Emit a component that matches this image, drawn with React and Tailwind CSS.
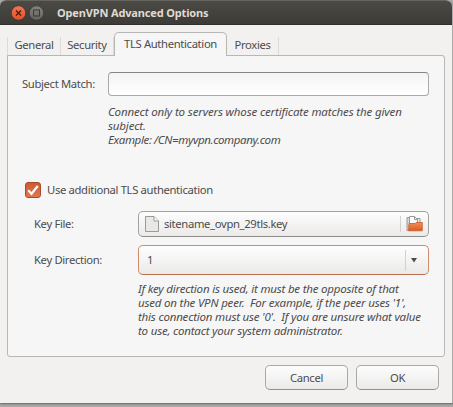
import React, { useState } from "react";

function FileIcon() {
    return (
        <svg className="h-4 w-[14px] shrink-0" viewBox="0 0 14 16">
            <path
                d="M.5 .5h8.5l4.5 4.5v10.5h-13z"
                fill="#e9e8e6"
                stroke="#9a9a97"
            />
            <path d="M9 .5v4.5h4.5" fill="#fbfbfb" stroke="#9a9a97" />
        </svg>
    );
}

function FolderIcon() {
    return (
        <svg className="h-4 w-[17px] shrink-0" viewBox="0 0 17 16">
            <defs>
                <linearGradient id="folder" x1="0" y1="0" x2="0" y2="1">
                    <stop offset="0" stopColor="#f0905c" />
                    <stop offset="1" stopColor="#dd5a20" />
                </linearGradient>
            </defs>
            <path d="M1 14.5v-13h3v13z" fill="#d8d7d4" stroke="#9b9a97" />
            <path d="M9 2.5h5v5H9z" fill="#e9e8e6" stroke="#9b9a97" />
            <path
                d="M3.5 8V.5h5l3 3V8z"
                fill="#fafafa"
                stroke="#9b9a97"
            />
            <path d="M8.5 .5v3h3" fill="none" stroke="#9b9a97" />
            <path
                d="M3 7.5h6l1-1h6.3v8.3H2.5z"
                fill="url(#folder)"
                stroke="#cf5a28"
                strokeWidth=".8"
            />
        </svg>
    );
}

function TitleBar() {
    return (
        <div className="flex h-[25px] items-center rounded-t-[6px] border-t border-[#66645e] border-b border-b-[#2f2e2a] bg-linear-to-b from-[#4c4a45] to-[#3c3b37] pl-[11px]">
            <svg className="mt-px h-4 w-[34px] shrink-0" viewBox="0 0 34 16">
                <defs>
                    <linearGradient id="close" x1="0" y1="0" x2="0" y2="1">
                        <stop offset="0" stopColor="#f4764f" />
                        <stop offset="1" stopColor="#e2502a" />
                    </linearGradient>
                    <linearGradient id="max" x1="0" y1="0" x2="0" y2="1">
                        <stop offset="0" stopColor="#85847c" />
                        <stop offset="1" stopColor="#64635c" />
                    </linearGradient>
                </defs>
                <circle cx="7.5" cy="8" r="7.2" fill="url(#close)" stroke="#35332f" strokeWidth=".6" />
                <path d="M5 5.5l5 5m0-5l-5 5" stroke="#4a1b10" strokeWidth="1.3" />
                <circle cx="25.5" cy="8" r="7.2" fill="url(#max)" stroke="#35332f" strokeWidth=".6" />
                <rect x="22.5" y="5" width="6" height="6" fill="none" stroke="#3a3934" />
            </svg>
            <h1 className="ml-3 text-[11px] font-bold tracking-[-0.15px] whitespace-nowrap text-[#dfdbd2]">
                OpenVPN Advanced Options
            </h1>
        </div>
    );
}

const tabs = [
    { name: "General", width: "w-[54px]" },
    { name: "Security", width: "w-[53px]" },
    { name: "TLS Authentication", width: "w-[113px]" },
    { name: "Proxies", width: "w-[52px]" },
];

export default function App() {
    const [activeTab, setActiveTab] = useState("TLS Authentication");
    const [useTls, setUseTls] = useState(true);
    const [subject, setSubject] = useState("");

    return (
        <div className="h-[407px] w-[453px] overflow-hidden bg-[#aaa9a8] font-['Noto_Sans',sans-serif] text-[11.25px] leading-[14px] tracking-[-0.34px] text-[#4c4c4c]">
            <div className="flex h-[403px] w-[453px] flex-col rounded-t-[6px] border-r border-[#aaa9a7] bg-[#f2f1f0] shadow-[0_1px_2px_#666]">
                <TitleBar />

                {/* Tabs */}
                <div className="mt-[7px] ml-[7px] flex h-6 items-end">
                    {tabs.map((tab) => (
                        <button
                            key={tab.name}
                            onClick={() => setActiveTab(tab.name)}
                            className={`shrink-0 whitespace-nowrap ${tab.width} ${
                                activeTab === tab.name
                                    ? "relative h-6 rounded-t-[5px] border border-b-0 border-[#b9b7b4] bg-[#f7f6f6] pb-0.5"
                                    : "h-[19px] border-r border-[#dddbd9] pb-[3px] first:border-l"
                            }`}
                        >
                            {tab.name}
                        </button>
                    ))}
                </div>

                {/* Tab page */}
                <div className="-mt-px ml-[7px] h-[302px] w-[438px] rounded-[3px] rounded-tl-none border border-[#b9b7b4] bg-[#f7f6f6]">
                    <div className="mt-4 ml-[14px] flex h-6 items-center">
                        <label htmlFor="subject" className="w-[86px] whitespace-nowrap">
                            Subject Match:
                        </label>
                        <input
                            id="subject"
                            value={subject}
                            onChange={(e) => setSubject(e.target.value)}
                            className="h-6 w-[321px] rounded-[4px] border border-[#aaa9a6] border-t-[#858585] bg-linear-to-b from-[#f4f4f4] to-white px-2 outline-none"
                        />
                    </div>
                    <p className="mt-[9px] ml-[100px] text-[11.5px] tracking-[-0.14px] whitespace-nowrap italic">
                        Connect only to servers whose certificate matches the given
                        <br />
                        subject.
                        <br />
                        <span className="tracking-[-0.36px]">
                            Example: /CN=myvpn.company.com
                        </span>
                    </p>

                    <label className="mt-[35px] ml-[17px] flex h-4 items-center whitespace-nowrap">
                        <input
                            type="checkbox"
                            checked={useTls}
                            onChange={(e) => setUseTls(e.target.checked)}
                            className="sr-only"
                        />
                        <span className="mr-[6px] flex h-4 w-4 items-center justify-center rounded-[3px] border border-[#a94a28] bg-linear-to-b from-[#cf5a33] to-[#dd7850]">
                            {useTls && (
                                <svg className="h-3 w-3" viewBox="0 0 12 12">
                                    <path
                                        d="M1.2 6.2l3.3 3.6L10.8 2"
                                        fill="none"
                                        stroke="#fff"
                                        strokeWidth="2.2"
                                    />
                                </svg>
                            )}
                        </span>
                        Use additional TLS authentication
                    </label>

                    <div className="mt-[13px] ml-[26px] flex h-[26px] items-center">
                        <span className="w-[104px]">Key File:</span>
                        <button className="flex h-[26px] w-[291px] items-center rounded-[5px] border border-[#a3a29f] border-b-[#8c8b88] bg-linear-to-b from-[#fdfdfd] to-[#ebeae9] pr-[5px] pl-1.5">
                            <FileIcon />
                            <span className="ml-[5px]">sitename_ovpn_29tls.key</span>
                            <span className="mr-[5px] ml-auto h-4 w-px bg-[#d3d1cf]" />
                            <FolderIcon />
                        </button>
                    </div>

                    <div className="mt-2 ml-[26px] flex h-[30px] items-center">
                        <span className="w-[104px]">Key Direction:</span>
                        <button className="flex h-[30px] w-[291px] items-center rounded-[5px] border border-[#d08b6c] border-b-[#b96e4e] bg-linear-to-b from-[#fefefe] to-[#ebeae9] pr-[11px] pl-2">
                            <span>1</span>
                            <span className="mr-[5px] ml-auto h-[21px] w-px bg-[#d3d1cf]" />
                            <svg className="h-1.5 w-1.5" viewBox="0 0 6 6">
                                <path d="M0 1h6L3 5.5z" fill="#4c4c4c" />
                            </svg>
                        </button>
                    </div>
                    <p className="mt-[7px] ml-[130px] text-[11.5px] tracking-[-0.2px] whitespace-pre italic">
                        {"If key direction is used, it must be the opposite of that\n" +
                            "used on the VPN peer.  For example, if the peer uses '1',\n" +
                            "this connection must use '0'.  If you are unsure what value\n" +
                            "to use, contact your system administrator."}
                    </p>
                </div>

                {/* Dialog buttons */}
                <div className="mt-[8px] mr-[13px] flex justify-end gap-2">
                    {["Cancel", "OK"].map((name) => (
                        <button
                            key={name}
                            className="h-[25px] w-[83px] rounded-[5px] border border-[#aaa9a6] border-b-[#91908d] bg-linear-to-b from-[#fdfdfd] to-[#ebeae9]"
                        >
                            {name}
                        </button>
                    ))}
                </div>
            </div>
        </div>
    );
}
